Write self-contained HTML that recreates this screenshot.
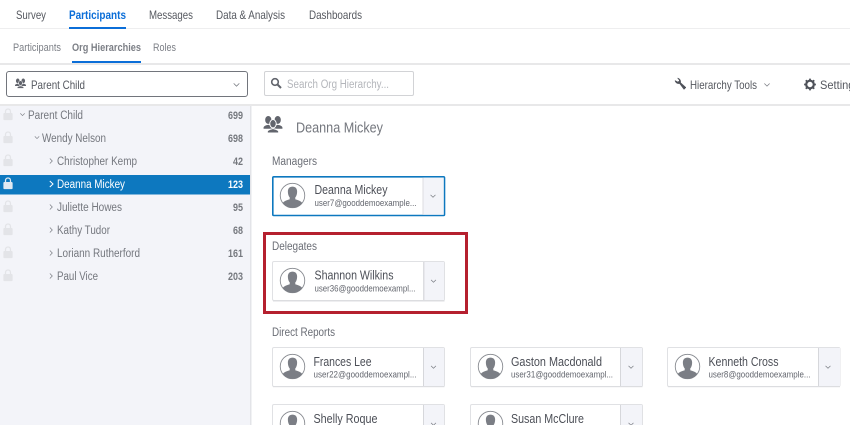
<!DOCTYPE html>
<html><head><meta charset="utf-8"><title>Org Hierarchies</title>
<style>
html,body{margin:0;padding:0;width:850px;height:425px;overflow:hidden;background:#fff}
svg{display:block;filter:blur(.35px)}
text{font-family:"Liberation Sans",sans-serif;font-size:11px;fill:#6b6f78}
.t{font-size:12px;fill:#55585f}
.b{font-weight:bold;fill:#0b6ed8}
.s{font-size:11px;fill:#7c7f86}
.r{font-size:11.5px;fill:#74777e}
.c{font-size:11px;font-weight:bold;fill:#75787e}
.n{font-size:12.5px;fill:#4c4f57}
.e{font-size:9.5px;fill:#63666e}
.l{font-size:11.5px;fill:#6a6d75}
</style></head><body>
<svg width="850" height="425" viewBox="0 0 850 425" xmlns="http://www.w3.org/2000/svg">
<defs>
<symbol id="av" viewBox="0 0 28 28" overflow="visible">
<circle cx="14" cy="14" r="12.7" fill="#fff" stroke="#85888e" stroke-width=".9"/>
<path d="M3.8 21.8C5.2 19.8 8 18.8 11 18L11.2 16.200C9.800 14.600 9.200 12.200 9.200 10 9.200 6.600 11 4.800 14 4.800S18.800 6.600 18.800 10C18.800 12.200 18.200 14.600 16.800 16.200L17 18C20 18.800 22.800 19.800 24.200 21.800 22 25 18.300 26.700 14 26.700S6 25 3.800 21.800Z" fill="#7b7e85"/>
</symbol>
<symbol id="lk" viewBox="0 0 10 13" overflow="visible">
<path d="M2.4 5.6V3.800C2.400 2 3.500 1 5 1S7.600 2 7.600 3.800V5.600" fill="none" stroke="currentColor" stroke-width="1.300"/>
<rect x=".2" y="5.200" width="9.600" height="7.400" rx="1" fill="currentColor"/>
</symbol>
<symbol id="cd" viewBox="0 0 8 5" overflow="visible"><path d="M.5.5 4 4 7.500.5" fill="none" stroke="#7a7d84" stroke-width="1"/></symbol>
<symbol id="cr" viewBox="0 0 5 8" overflow="visible"><path d="M.5.5 4 4 .5 7.500" fill="none" stroke="#7a7d84" stroke-width="1"/></symbol>
<symbol id="pp" viewBox="0 0 20 18" overflow="visible">
<ellipse cx="5" cy="4.200" rx="3.300" ry="4.200" fill="#62656d"/>
<ellipse cx="15" cy="4.200" rx="3.300" ry="4.200" fill="#62656d"/>
<path d="M0 13.500V12.500C0 10.500 2.800 9.800 5 9.300 7.200 9.800 10 10.500 10 12.500V13.500Z" fill="#62656d"/>
<path d="M10 13.500V12.500C10 10.500 12.800 9.800 15 9.300 17.200 9.800 20 10.500 20 12.500V13.500Z" fill="#62656d"/>
<ellipse cx="10" cy="8.200" rx="3.400" ry="4.400" fill="#62656d" stroke="#fff" stroke-width="1"/>
<path d="M4 18V16.500C4 14.500 7.500 14 10 13.300 12.500 14 16 14.500 16 16.500V18Z" fill="#62656d" stroke="#fff" stroke-width="1"/>
</symbol>
</defs>

<rect width="850" height="425" fill="#fff"/>

<!-- Top tabs -->
<rect x="0" y="28" width="850" height="1" fill="#eeeeef"/>
<text class="t" x="16" y="19" textLength="30" lengthAdjust="spacingAndGlyphs">Survey</text>
<text class="t b" x="69" y="19" textLength="57" lengthAdjust="spacingAndGlyphs">Participants</text>
<rect x="69" y="27" width="57" height="2" fill="#0b6ed8"/>
<text class="t" x="149" y="19" textLength="44" lengthAdjust="spacingAndGlyphs">Messages</text>
<text class="t" x="216" y="19" textLength="69" lengthAdjust="spacingAndGlyphs">Data &amp; Analysis</text>
<text class="t" x="309" y="19" textLength="53" lengthAdjust="spacingAndGlyphs">Dashboards</text>

<!-- Sub tabs -->
<rect x="0" y="63" width="850" height="2" fill="#e8e8e9"/>
<text class="s" x="13" y="51" textLength="48" lengthAdjust="spacingAndGlyphs">Participants</text>
<text class="s b" x="72" y="51" textLength="69" lengthAdjust="spacingAndGlyphs">Org Hierarchies</text>
<rect x="72" y="61" width="69" height="2" fill="#0b6ed8"/>
<text class="s" x="153" y="51" textLength="23" lengthAdjust="spacingAndGlyphs">Roles</text>

<!-- Toolbar -->
<rect x="6.500" y="71.500" width="241" height="25" rx="2.500" fill="#fff" stroke="#72757c"/>
<use href="#pp" x="15" y="78.500" width="11" height="10"/>
<text class="t" x="31" y="89" textLength="54" lengthAdjust="spacingAndGlyphs">Parent Child</text>
<use href="#cd" x="233" y="83" width="7" height="4"/>

<rect x="264.500" y="71.500" width="149" height="24" rx="1.500" fill="#fff" stroke="#d2d3d6"/>
<circle cx="275" cy="82" r="3.300" fill="none" stroke="#62656d" stroke-width="1.600"/>
<path d="M277.500 84.500 281 88" stroke="#62656d" stroke-width="2" fill="none"/>
<text x="287" y="88" style="font-size:11.500px;fill:#b4b6bb" textLength="102" lengthAdjust="spacingAndGlyphs">Search Org Hierarchy...</text>

<path d="M675 80.500C675.300 83 677.500 84 679.500 83.500L684 89.500 686 87.500 680.500 82.500C681 80.500 680 78.500 677.500 78L679.500 80.500 678 82 675 80.500Z" fill="#4f525a" stroke="#4f525a" stroke-width=".5"/>
<text class="t" x="690" y="89" textLength="67" lengthAdjust="spacingAndGlyphs">Hierarchy Tools</text>
<use href="#cd" x="764" y="83" width="6" height="4"/>
<circle cx="810" cy="84.500" r="3.800" fill="none" stroke="#4f525a" stroke-width="2.200"/>
<path d="M810 78.600V81M810 88V90.400M804.100 84.500H806.500M813.500 84.500H815.900M805.800 80.300 807.500 82M812.500 87 814.200 88.700M805.800 88.700 807.500 87M812.500 82 814.200 80.300" stroke="#4f525a" stroke-width="1.800" fill="none"/>
<text class="t" x="820" y="89" textLength="40" lengthAdjust="spacingAndGlyphs">Settings</text>

<rect x="0" y="104" width="850" height="2" fill="#e8e8e9"/>

<!-- Sidebar -->
<rect x="0" y="106" width="250" height="319" fill="#f3f4f9"/>
<rect x="250" y="106" width="1.500" height="319" fill="#e3e4e8"/>
<rect x="0" y="175" width="250" height="19.500" fill="#0d78bf"/>

<g color="#e3e4e8">
<use href="#lk" x="3" y="108" width="10" height="12.500"/>
<use href="#lk" x="3" y="131" width="10" height="12.500"/>
<use href="#lk" x="3" y="154" width="10" height="12.500"/>
<use href="#lk" x="3" y="200" width="10" height="12.500"/>
<use href="#lk" x="3" y="223" width="10" height="12.500"/>
<use href="#lk" x="3" y="246" width="10" height="12.500"/>
<use href="#lk" x="3" y="269" width="10" height="12.500"/>
</g>
<use href="#lk" x="3" y="177" width="10" height="12.500" color="#dfe9f2"/>

<use href="#cd" x="20" y="113" width="5" height="3.200"/>
<use href="#cd" x="34.500" y="136" width="5" height="3.200"/>
<use href="#cr" x="49.500" y="158" width="3.500" height="6"/>
<path d="M49.800 181 53 184 49.800 187" fill="none" stroke="#fff" stroke-width="1"/>
<use href="#cr" x="49.500" y="204" width="3.500" height="6"/>
<use href="#cr" x="49.500" y="227" width="3.500" height="6"/>
<use href="#cr" x="49.500" y="250" width="3.500" height="6"/>
<use href="#cr" x="49.500" y="273" width="3.500" height="6"/>

<text class="r" x="28" y="119" textLength="55" lengthAdjust="spacingAndGlyphs">Parent Child</text>
<text class="r" x="42" y="142" textLength="64" lengthAdjust="spacingAndGlyphs">Wendy Nelson</text>
<text class="r" x="57" y="165" textLength="80" lengthAdjust="spacingAndGlyphs">Christopher Kemp</text>
<text class="r" x="57" y="188" textLength="68" lengthAdjust="spacingAndGlyphs" style="fill:#fff">Deanna Mickey</text>
<text class="r" x="57" y="211" textLength="65" lengthAdjust="spacingAndGlyphs">Juliette Howes</text>
<text class="r" x="57" y="234" textLength="53" lengthAdjust="spacingAndGlyphs">Kathy Tudor</text>
<text class="r" x="57" y="257" textLength="83" lengthAdjust="spacingAndGlyphs">Loriann Rutherford</text>
<text class="r" x="57" y="280" textLength="41" lengthAdjust="spacingAndGlyphs">Paul Vice</text>

<text class="c" x="228" y="119" textLength="15" lengthAdjust="spacingAndGlyphs">699</text>
<text class="c" x="228" y="142" textLength="15" lengthAdjust="spacingAndGlyphs">698</text>
<text class="c" x="233" y="165" textLength="10" lengthAdjust="spacingAndGlyphs">42</text>
<text class="c" x="228" y="188" textLength="15" lengthAdjust="spacingAndGlyphs" style="fill:#fff">123</text>
<text class="c" x="233" y="211" textLength="10" lengthAdjust="spacingAndGlyphs">95</text>
<text class="c" x="233" y="234" textLength="10" lengthAdjust="spacingAndGlyphs">68</text>
<text class="c" x="228" y="257" textLength="15" lengthAdjust="spacingAndGlyphs">161</text>
<text class="c" x="228" y="280" textLength="15" lengthAdjust="spacingAndGlyphs">203</text>

<!-- Detail header -->
<use href="#pp" x="263.500" y="116" width="19" height="17"/>
<text x="296" y="132.500" textLength="87" lengthAdjust="spacingAndGlyphs" style="font-size:15px;fill:#74777e">Deanna Mickey</text>

<text class="l" x="272" y="165" textLength="45" lengthAdjust="spacingAndGlyphs">Managers</text>

<!-- Manager card -->
<rect x="272.800" y="176.800" width="171.700" height="38.700" rx="1" fill="#fff" stroke="#0d78bf" stroke-width="1.600"/>
<rect x="423" y="177.600" width="20.700" height="37.100" fill="#f3f4f9"/>
<rect x="422.500" y="177.600" width="1" height="37.100" fill="#dcdde1"/>
<use href="#av" x="279" y="182" width="27" height="27"/>
<text class="n" x="314.500" y="194" textLength="73" lengthAdjust="spacingAndGlyphs">Deanna Mickey</text>
<text class="e" x="314.500" y="206" textLength="102" lengthAdjust="spacingAndGlyphs">user7@gooddemoexample...</text>
<use href="#cd" x="430" y="194.500" width="6" height="3.500"/>

<!-- Delegates -->
<rect x="264.500" y="233.500" width="202" height="79" fill="none" stroke="#b5202f" stroke-width="3"/>
<text class="l" x="272" y="250" textLength="45" lengthAdjust="spacingAndGlyphs">Delegates</text>
<rect x="272.500" y="261.500" width="172" height="39" rx="1.500" fill="#fff" stroke="#e0e1e4"/>
<rect x="423" y="262" width="21" height="38" fill="#f3f4f9"/>
<rect x="423" y="262" width="1.500" height="38" fill="#dcdde1"/>
<rect x="273" y="300" width="171.500" height="1.500" fill="#dcdde0"/>
<use href="#av" x="279" y="267" width="27" height="27"/>
<text class="n" x="314.500" y="279.500" textLength="79" lengthAdjust="spacingAndGlyphs">Shannon Wilkins</text>
<text class="e" x="314.500" y="291.500" textLength="101" lengthAdjust="spacingAndGlyphs">user36@gooddemoexampl...</text>
<use href="#cd" x="430.500" y="279.500" width="6" height="3.500"/>

<!-- Direct reports -->
<text class="l" x="272" y="336" textLength="63" lengthAdjust="spacingAndGlyphs">Direct Reports</text>

<g>
<rect x="272.500" y="347.500" width="172" height="39" rx="1.500" fill="#fff" stroke="#e0e1e4"/>
<rect x="423" y="348" width="21" height="38" fill="#f3f4f9"/>
<rect x="423" y="348" width="1" height="38" fill="#d6d7db"/>
<rect x="273" y="386" width="171.500" height="1.200" fill="#dcdde0"/>
<use href="#av" x="279" y="353" width="27" height="27"/>
<text class="n" x="313.500" y="366" textLength="58" lengthAdjust="spacingAndGlyphs">Frances Lee</text>
<text class="e" x="313.500" y="377.500" textLength="103" lengthAdjust="spacingAndGlyphs">user22@gooddemoexampl...</text>
<use href="#cd" x="430.500" y="365.500" width="6" height="3.500"/>
</g>
<g>
<rect x="470.500" y="347.500" width="172" height="39" rx="1.500" fill="#fff" stroke="#e0e1e4"/>
<rect x="620" y="348" width="22" height="38" fill="#f3f4f9"/>
<rect x="620" y="348" width="1" height="38" fill="#d6d7db"/>
<rect x="471" y="386" width="171.500" height="1.200" fill="#dcdde0"/>
<use href="#av" x="477" y="353" width="27" height="27"/>
<text class="n" x="511" y="366" textLength="91" lengthAdjust="spacingAndGlyphs">Gaston Macdonald</text>
<text class="e" x="511" y="377.500" textLength="102" lengthAdjust="spacingAndGlyphs">user31@gooddemoexampl...</text>
<use href="#cd" x="628" y="365.500" width="6" height="3.500"/>
</g>
<g>
<rect x="667.500" y="347.500" width="172.500" height="39" rx="1.500" fill="#fff" stroke="#e0e1e4"/>
<rect x="818" y="348" width="22" height="38" fill="#f3f4f9"/>
<rect x="818" y="348" width="1" height="38" fill="#d6d7db"/>
<rect x="668" y="386" width="172" height="1.200" fill="#dcdde0"/>
<use href="#av" x="674" y="353" width="27" height="27"/>
<text class="n" x="708.500" y="366" textLength="70" lengthAdjust="spacingAndGlyphs">Kenneth Cross</text>
<text class="e" x="708.500" y="377.500" textLength="102" lengthAdjust="spacingAndGlyphs">user8@gooddemoexample...</text>
<use href="#cd" x="825" y="365.500" width="6" height="3.500"/>
</g>
<g>
<rect x="272.500" y="404.500" width="172" height="39" rx="1.500" fill="#fff" stroke="#e0e1e4"/>
<rect x="423" y="405" width="21" height="38" fill="#f3f4f9"/>
<rect x="423" y="405" width="1" height="38" fill="#d6d7db"/>
<use href="#av" x="279" y="410" width="27" height="27"/>
<text class="n" x="313.500" y="423" textLength="64" lengthAdjust="spacingAndGlyphs">Shelly Roque</text>
<use href="#cd" x="430.500" y="422.500" width="6" height="3.500"/>
</g>
<g>
<rect x="470.500" y="404.500" width="172" height="39" rx="1.500" fill="#fff" stroke="#e0e1e4"/>
<rect x="620" y="405" width="22" height="38" fill="#f3f4f9"/>
<rect x="620" y="405" width="1" height="38" fill="#d6d7db"/>
<use href="#av" x="477" y="410" width="27" height="27"/>
<text class="n" x="511" y="423" textLength="73" lengthAdjust="spacingAndGlyphs">Susan McClure</text>
<use href="#cd" x="628" y="422.500" width="6" height="3.500"/>
</g>
</svg>
</body></html>
